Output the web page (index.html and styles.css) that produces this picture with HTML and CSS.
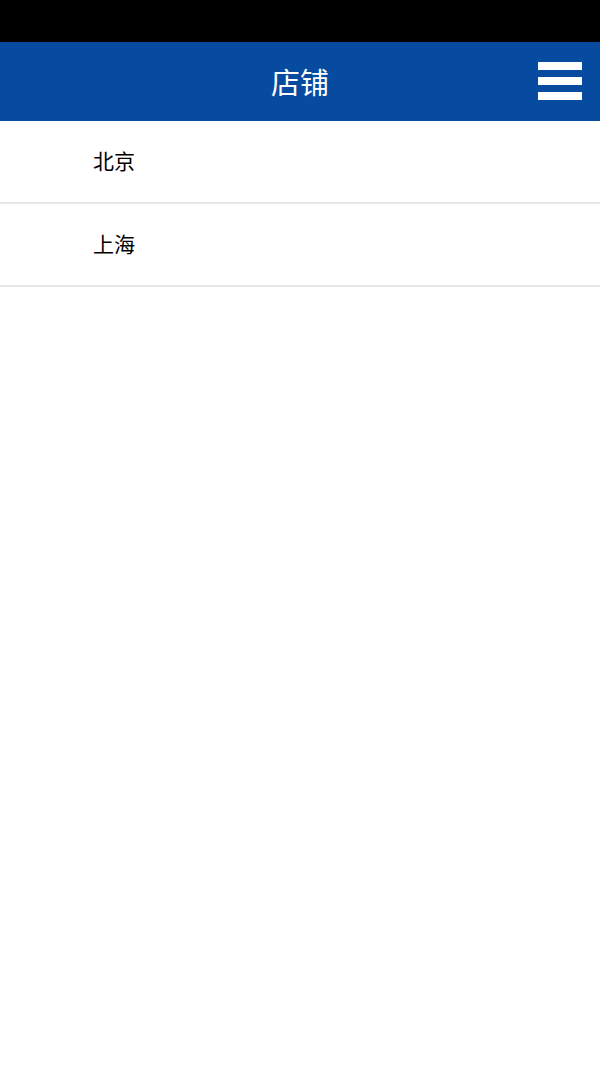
FILE: index.html
```html
<!DOCTYPE html>
<html lang="zh">
<head>
<meta charset="utf-8">
<title>店铺</title>
<link rel="stylesheet" href="styles.css">
</head>
<body>
<div class="statusbar"></div>
<header class="topbar">
  <h1 class="title">店铺</h1>
  <button class="menu" aria-label="menu">
    <span class="bar"></span>
    <span class="bar"></span>
    <span class="bar"></span>
  </button>
</header>
<ul class="list">
  <li class="item">北京</li>
  <li class="item">上海</li>
</ul>
</body>
</html>
```

FILE: styles.css
```css
html, body {
  margin: 0;
  padding: 0;
  background: #ffffff;
  font-family: "Noto Sans CJK SC", "Noto Sans", sans-serif;
}
.statusbar {
  height: 42px;
  background: #000000;
}
.topbar {
  position: relative;
  height: 79px;
  background: #074ba0;
  display: flex;
  align-items: center;
  justify-content: center;
}
.title {
  margin: 0;
  color: #ffffff;
  font-size: 29px;
  font-weight: 400;
  line-height: 1;
}
.menu {
  position: absolute;
  right: 18px;
  top: 20px;
  width: 44px;
  padding: 0;
  border: 0;
  background: transparent;
  display: flex;
  flex-direction: column;
  gap: 7px;
}
.bar {
  display: block;
  height: 8px;
  background: #ffffff;
}
.list {
  list-style: none;
  margin: 0;
  padding: 0;
}
.item {
  box-sizing: border-box;
  height: 83px;
  display: flex;
  align-items: center;
  padding-left: 93px;
  padding-bottom: 3px;
  font-size: 21px;
  font-weight: 400;
  color: #000000;
  border-bottom: 2px solid #e6e6e6;
}
```
